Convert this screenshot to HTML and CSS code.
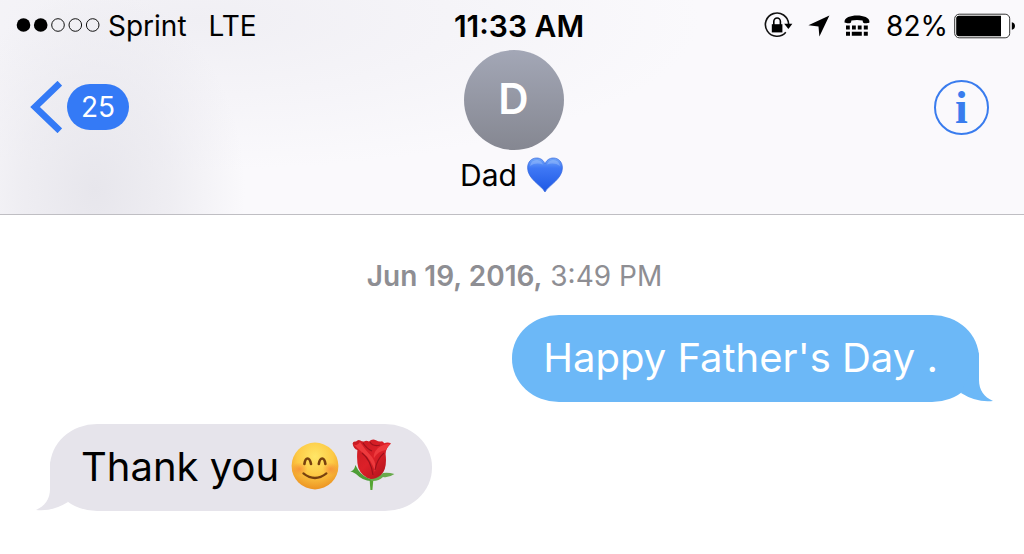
FILE: index.html
```html
<!DOCTYPE html>
<html lang="en">
<head>
<meta charset="utf-8">
<meta name="viewport" content="width=device-width, initial-scale=1">
<title>Dad</title>
<link rel="stylesheet" href="styles.css">
</head>
<body>
<header class="header">
  <div class="status">
    <div class="status-left">
      <svg class="signal" width="84" height="16" viewBox="0 0 84 16" aria-hidden="true">
        <circle cx="7.5" cy="8" r="6.8"/><circle cx="24.7" cy="8" r="6.8"/>
        <g fill="none" stroke="#111" stroke-width="1"><circle cx="42" cy="8" r="6.3"/><circle cx="59.3" cy="8" r="6.3"/><circle cx="76.7" cy="8" r="6.3"/></g>
      </svg>
      <span class="carrier">Sprint</span>
      <span class="network">LTE</span>
    </div>
    <div class="time">11:33 AM</div>
    <div class="status-right">
      <svg class="lock" width="29" height="28" viewBox="0 0 29 28" aria-hidden="true">
        <path d="M21.8 20.2A11.6 11.6 0 1 1 24.6 12" fill="none" stroke="#111" stroke-width="1.6"/>
        <path d="M20.2 11.8H28.4L24.4 17Z"/>
        <path d="M7.8 12.2H18.4V20.4H7.8Z"/>
        <path d="M9.8 13V9.6A3.3 3.6 0 0 1 16.4 9.6V13" fill="none" stroke="#000" stroke-width="1.6"/>
      </svg>
      <svg class="arrow" width="22" height="22" viewBox="0 0 22 22" aria-hidden="true"><path d="M21.4 .4L11.4 21.6L10.5 11.4L.4 10.2Z"/></svg>
      <svg class="tty" width="26" height="22" viewBox="0 0 26 22" aria-hidden="true">
        <path d="M.6 7.6C-.2 3 6 .6 13 .6S26.2 3 25.4 7.6C25 8.6 19.4 8.4 19 7.4L18.6 5.6Q13 4.4 7.4 5.6L7 7.4C6.6 8.4 1 8.6 .6 7.6Z"/>
        <path d="M2 10.6h3.8v4H2zM8 10.6h3.8v4H8zM13.8 10.6h3.8v4h-3.8zM19.8 10.6h4v4h-4zM2 16.8h4v4H2zM7.8 16.8h10v4h-10zM19.8 16.8h4v4h-4z"/>
      </svg>
      <span class="percent">82%</span>
      <svg class="battery" width="62" height="26" viewBox="0 0 62 26" aria-hidden="true">
        <rect x=".7" y="1.2" width="55" height="23.6" rx="4.5" fill="#fff" stroke="#333" stroke-width="1"/>
        <path d="M5 2.7H47V23.3H5Q2.2 23.3 2.2 20.5V5.5Q2.2 2.7 5 2.7Z"/>
        <path d="M57.8 9.2Q61 10 61 13T57.8 16.8Z"/>
      </svg>
    </div>
  </div>
  <nav class="nav">
    <button class="back" type="button" aria-label="Back, 25 unread">
      <svg width="32" height="52" viewBox="0 0 32 52" aria-hidden="true"><path d="M29.8 2.2L5 26L29.8 49.8" fill="none" stroke="#347af6" stroke-width="6.6"/></svg>
      <span class="count">25</span>
    </button>
    <div class="contact">
      <div class="avatar">D</div>
      <div class="name">Dad
        <svg width="36" height="36" viewBox="0 0 36 36" role="img" aria-label="Blue heart">
          <defs><linearGradient id="heart" x1="0" y1="0" x2="0" y2="1"><stop offset="0" stop-color="#74a8f8"/><stop offset=".3" stop-color="#3f78f5"/><stop offset="1" stop-color="#1e58e4"/></linearGradient></defs>
          <path d="M18 35C14 28 .6 22 .6 10.8C.6 4.8 4.6 1 9.6 1C13.8 1 16.8 3.4 18 7C19.2 3.4 22.2 1 26.4 1C31.4 1 35.4 4.8 35.4 10.8C35.4 22 22 28 18 35Z" fill="url(#heart)" stroke="#3467de" stroke-width=".7"/>
          <path d="M3 9Q4 3 10 3Q14.4 3.4 16 7.6Q9 5 3 9ZM20 7.6Q21.6 3.4 26 3Q32 3 33 9Q27 5 20 7.6Z" fill="#b4d2ff" opacity=".35"/>
        </svg>
      </div>
    </div>
    <button class="info" type="button" aria-label="Details">i</button>
  </nav>
</header>
<main class="thread">
  <p class="date"><strong>Jun 19, 2016,</strong> 3:49 PM</p>
  <div class="bubble sent">Happy Father's Day .
    <svg class="tail" width="34" height="52" viewBox="0 0 34 52" aria-hidden="true"><path d="M17.6 2Q18 4 18 9V30C18 40 23 47 32 51Q16 53 0 43Z" fill="#6cb8f7"/></svg>
  </div>
  <div class="bubble received">Thank you
    <svg class="smile" width="48" height="48" viewBox="0 0 48 48" role="img" aria-label="Smiling face">
      <defs>
        <radialGradient id="face" cx=".5" cy=".3" r=".7"><stop offset="0" stop-color="#ffe667"/><stop offset=".55" stop-color="#fdca45"/><stop offset="1" stop-color="#ec9322"/></radialGradient>
        <radialGradient id="blush"><stop offset="0" stop-color="#f3682f" stop-opacity=".5"/><stop offset="1" stop-color="#f3682f" stop-opacity="0"/></radialGradient>
      </defs>
      <circle cx="24" cy="24" r="23.4" fill="url(#face)"/>
      <ellipse cx="8.5" cy="27" rx="8" ry="6.5" fill="url(#blush)"/><ellipse cx="39.5" cy="27" rx="8" ry="6.5" fill="url(#blush)"/>
      <g fill="none" stroke="#77410f" stroke-linecap="round" stroke-width="2.6"><path d="M13.4 22C14.4 14.6 18.6 14.6 20 22"/><path d="M27.8 22C29 14.6 33.4 14.6 34.4 22"/><path d="M12.4 31.4Q24 40.6 35.4 31.4" stroke-width="2.2"/></g>
    </svg>
    <svg class="rose" width="46" height="52" viewBox="0 0 46 52" role="img" aria-label="Rose">
      <defs><linearGradient id="petal" x1="0" y1="0" x2="1" y2="1"><stop offset="0" stop-color="#c61b22"/><stop offset=".5" stop-color="#dc2028"/><stop offset="1" stop-color="#a81019"/></linearGradient></defs>
      <path d="M20.5 39H24.5L23.4 51H21.4Z" fill="#55a532"/>
      <path d="M.6 32Q5 33 6.4 26Q11 36 19 39Q24 41 22 42Q14 42 7 35Q4 33 .6 32Z" fill="#4d9d36"/>
      <path d="M45.4 35Q39 33 34 34Q30 38 22 39Q20 42 24 42Q30 42 34 38Q40 39 45.4 35Z" fill="#68aa4c"/>
      <path d="M3.6 4.4Q4 2 7 2.6Q9 0 11.4 1.4Q13 2.6 15 2.4Q17 1 20 2.4Q23 -.4 27 1.2Q30 3 33 2.2Q35 3 35 4.2Q39 2.6 42 4.4Q36.6 9 36.6 15Q38.4 30 32 36Q27 40 22 40Q13 38 9.4 29Q7.4 22 8.4 11Q4.4 9.6 3.6 4.4Z" fill="url(#petal)"/>
      <path d="M11 3Q17 12 23 18Q28 25 26 33Q23 21 14 14Q9 10 4 5Q8 8 11 3Z" fill="#ed3a3d"/>
      <path d="M41.6 4.4Q34 5 29 9Q24 14 25 19Q29 12 36.6 11Z" fill="#ed3a3d"/>
      <path d="M14 4Q18 10 23 12M21 3Q24 8 31 6M13 14Q22 21 24 36M35 14Q28 20 26 31" fill="none" stroke="#9c111b" stroke-width="1.1"/>
    </svg>
    <svg class="tail" width="34" height="52" viewBox="0 0 34 52" aria-hidden="true"><path d="M17.6 2Q18 4 18 9V30C18 40 23 47 32 51Q16 53 0 43Z" fill="#e6e4eb"/></svg>
  </div>
</main>
</body>
</html>
```
FILE: styles.css
```css
* { box-sizing: border-box; }
body {
  margin: 0;
  background: #fff;
  color: #000;
  font-family: Inter, "Liberation Sans", sans-serif;
}
button {
  padding: 0;
  border: 0;
  background: none;
  font: inherit;
  cursor: pointer;
}
svg { display: block; flex: none; }
.header {
  border-bottom: 1px solid #bfbec3;
  background:
    radial-gradient(ellipse 150px 200px at 95px 190px, #e7e6ec 0, #e7e6ec99 50%, #e7e6ec00 100%),
    radial-gradient(ellipse 500px 150px at 200px 20px, #f0eff4 0, #f0eff400 100%),
    #faf9fc;
}
.status {
  display: grid;
  grid-template-columns: 1fr auto 1fr;
  align-items: center;
  height: 50px;
  padding: 2px 8px 0 16px;
  font-size: 28px;
}
.status-left, .status-right { display: flex; align-items: center; }
.status-right { justify-content: flex-end; }
.carrier { margin-left: 8px; }
.network { margin-left: 22px; }
.signal { margin-top: -2px; }
.time { padding-left: 6px; font-size: 30px; font-weight: 600; }
.arrow { margin-left: 15px; }
.tty { margin-left: 14px; }
.percent { margin-left: 16px; }
.battery { margin-left: 6px; }
.nav {
  display: grid;
  grid-template-columns: 1fr auto 1fr;
  align-items: start;
  min-height: 164px;
  padding: 0 35px 0 30px;
}
.back {
  display: flex;
  align-items: center;
  justify-self: start;
  gap: 5px;
  margin-top: 31px;
}
.count {
  padding: 0 14px;
  border-radius: 23px;
  background: #347af6;
  color: #fff;
  font-size: 28px;
  line-height: 46px;
}
.contact {
  display: flex;
  flex-direction: column;
  align-items: center;
  padding-left: 8px;
}
.avatar {
  width: 100px;
  height: 100px;
  border-radius: 50%;
  background: linear-gradient(#a3a7b6, #858791);
  color: #fff;
  font-size: 42px;
  font-weight: 600;
  line-height: 98px;
  text-align: center;
}
.name {
  display: flex;
  align-items: center;
  gap: 10px;
  margin-top: 6px;
  padding-right: 4px;
  font-size: 30px;
  line-height: 38px;
}
.info {
  justify-self: end;
  width: 55px;
  height: 55px;
  margin-top: 30px;
  border: 2px solid #397cee;
  border-radius: 50%;
  color: #397cee;
  font: bold 46px/48px "Liberation Serif", serif;
}
.thread {
  display: flex;
  flex-direction: column;
  padding: 44px 45px 43px 50px;
}
.date {
  margin: 0 0 22px;
  color: #8e8e93;
  font-size: 28px;
  line-height: 34px;
  text-align: center;
}
.date strong { font-weight: 600; }
.bubble {
  position: relative;
  display: flex;
  align-items: center;
  min-height: 87px;
  border-radius: 47px / 43px;
  font-size: 40px;
  line-height: 50px;
}
.sent {
  align-self: flex-end;
  padding: 0 41px 2px 31px;
  background: #6cb8f7;
  color: #fff;
}
.received {
  align-self: flex-start;
  margin-top: 22px;
  padding: 0 37px 2px 31px;
  background: #e6e4eb;
}
.smile { margin: 0 0 2px 12px; }
.rose { margin: 0 0 4px 10px; }
.tail { position: absolute; right: -16px; bottom: 0; }
.received .tail { right: auto; left: -16px; transform: scaleX(-1); }
```
